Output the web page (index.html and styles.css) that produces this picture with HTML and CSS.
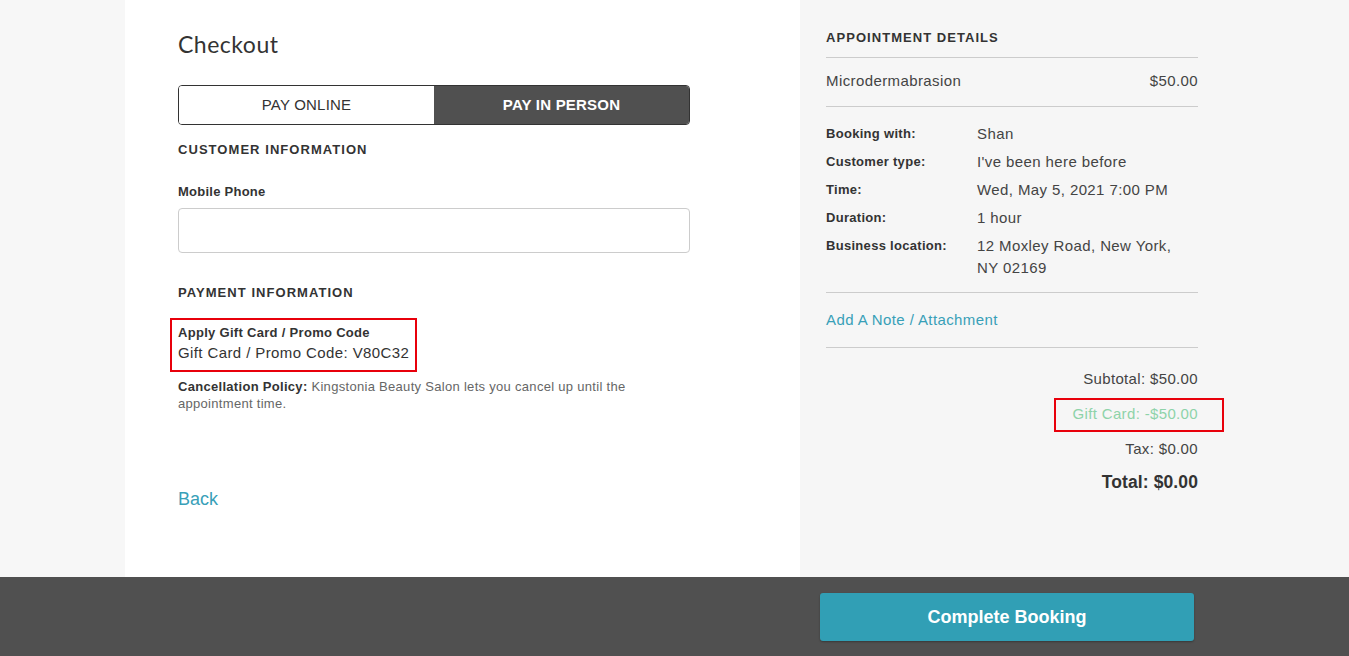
FILE: index.html
```html
<!DOCTYPE html>
<html lang="en">
<head>
    <meta charset="UTF-8">
    <meta name="viewport" content="width=device-width, initial-scale=1.0">
    <title>Checkout</title>
    <link rel="stylesheet" href="styles.css">
</head>
<body>
    <div class="page">
        <div class="content">
            <main class="checkout">
                <h1>Checkout</h1>

                <div class="payToggle">
                    <button type="button" class="payOption">PAY ONLINE</button>
                    <button type="button" class="payOption active">PAY IN PERSON</button>
                </div>

                <h2 class="sectionTitle customerTitle">CUSTOMER INFORMATION</h2>
                <label class="fieldLabel" for="phone">Mobile Phone</label>
                <input id="phone" class="textInput" type="tel">

                <h2 class="sectionTitle paymentTitle">PAYMENT INFORMATION</h2>
                <div class="promo highlight">
                    <div class="promoTitle">Apply Gift Card / Promo Code</div>
                    <div class="promoCode">Gift Card / Promo Code: V80C32</div>
                </div>
                <p class="policy"><b>Cancellation Policy:</b> Kingstonia Beauty Salon lets you cancel up until the appointment time.</p>

                <a class="backLink" href="#">Back</a>
            </main>

            <aside class="summary">
                <h2 class="sectionTitle summaryTitle">APPOINTMENT DETAILS</h2>
                <div class="serviceRow">
                    <span>Microdermabrasion</span>
                    <span>$50.00</span>
                </div>
                <dl class="details">
                    <dt>Booking with:</dt><dd>Shan</dd>
                    <dt>Customer type:</dt><dd>I've been here before</dd>
                    <dt>Time:</dt><dd>Wed, May 5, 2021 7:00 PM</dd>
                    <dt>Duration:</dt><dd>1 hour</dd>
                    <dt>Business location:</dt><dd>12 Moxley Road, New York, NY 02169</dd>
                </dl>
                <div class="noteRow"><a href="#">Add A Note / Attachment</a></div>
                <div class="totals">
                    <div>Subtotal: $50.00</div>
                    <div class="giftLine"><span class="giftMark">Gift Card: -$50.00</span></div>
                    <div>Tax: $0.00</div>
                    <div class="grandTotal">Total: $0.00</div>
                </div>
            </aside>
        </div>

        <footer class="bottomBar">
            <button type="button" class="completeBtn">Complete Booking</button>
        </footer>
    </div>
</body>
</html>
```

FILE: styles.css
```css
* {
    box-sizing: border-box;
}
body {
    margin: 0;
    font-family: 'Liberation Sans', Arial, sans-serif;
    background-color: #f7f7f7;
    color: #444;
}
.page {
    display: flex;
    flex-direction: column;
    height: 100vh;
}
.content {
    flex: 1;
    display: flex;
    min-height: 0;
}
.checkout {
    margin-left: 125px;
    width: 675px;
    background-color: #ffffff;
    padding: 30px 110px 0 53px;
    display: flex;
    flex-direction: column;
    align-items: flex-start;
}
.checkout > * {
    width: 100%;
}
h1 {
    margin: 0 0 27px;
    font-family: 'Lato', 'Liberation Sans', sans-serif;
    font-weight: 400;
    font-size: 23px;
    line-height: 28px;
    letter-spacing: 0.5px;
    color: #333;
}
.payToggle {
    display: flex;
    height: 40px;
    border: 1px solid #333;
    border-radius: 4px;
    overflow: hidden;
}
.payOption {
    flex: 1;
    border: none;
    background: #ffffff;
    font-family: inherit;
    font-size: 15px;
    color: #333;
    letter-spacing: 0.2px;
    padding: 0 0 2px;
}
.payOption.active {
    background: #505050;
    color: #ffffff;
    font-weight: bold;
}
.sectionTitle {
    margin: 0;
    font-size: 13px;
    line-height: 16px;
    font-weight: bold;
    letter-spacing: 1.05px;
    color: #333;
}
.customerTitle {
    margin-top: 17px;
}
.fieldLabel {
    display: block;
    margin-top: 26px;
    font-size: 13px;
    line-height: 16px;
    font-weight: bold;
    letter-spacing: 0.25px;
    color: #333;
}
.textInput {
    display: block;
    margin-top: 8px;
    height: 45px;
    border: 1px solid #ccc;
    border-radius: 4px;
    background: #fff;
}
.paymentTitle {
    margin-top: 32px;
}
.promo {
    width: auto;
    margin: 17px 0 0 -8px;
    padding: 4px 6px 6px 6px;
}
.highlight {
    border: 2px solid #e8000b;
}
.promoTitle {
    font-size: 13px;
    line-height: 18px;
    font-weight: bold;
    letter-spacing: 0.3px;
    color: #333;
}
.promoCode {
    font-size: 15px;
    line-height: 22px;
    letter-spacing: 0.4px;
    color: #333;
}
.policy {
    margin: 6px 0 0;
    font-size: 13px;
    line-height: 17px;
    letter-spacing: 0.3px;
    color: #666;
}
.policy b {
    color: #333;
}
.backLink {
    margin-top: 76px;
    font-size: 18px;
    line-height: 22px;
    color: #38a0b8;
    text-decoration: none;
}
.summary {
    flex: 1;
    background-color: #f6f6f6;
    padding: 30px 151px 0 26px;
}
.summaryTitle {
    padding-bottom: 11px;
    border-bottom: 1px solid #ccc;
}
.serviceRow {
    display: flex;
    justify-content: space-between;
    padding: 12px 0 14px;
    font-size: 15px;
    line-height: 22px;
    letter-spacing: 0.4px;
    border-bottom: 1px solid #ccc;
}
.details {
    margin: 0;
    padding: 16px 0 13px;
    display: grid;
    grid-template-columns: 151px 1fr;
    row-gap: 6px;
    border-bottom: 1px solid #ccc;
}
.details dt {
    font-size: 13px;
    line-height: 22px;
    font-weight: bold;
    letter-spacing: 0.3px;
    color: #333;
}
.details dd {
    margin: 0;
    padding-right: 6px;
    font-size: 15px;
    line-height: 22px;
    letter-spacing: 0.4px;
}
.noteRow {
    padding: 16px 0;
    font-size: 15px;
    line-height: 22px;
    letter-spacing: 0.4px;
    border-bottom: 1px solid #ccc;
}
.noteRow a {
    color: #38a0b8;
    text-decoration: none;
}
.totals {
    margin-top: 20px;
    display: flex;
    flex-direction: column;
    align-items: flex-end;
    gap: 13px;
    font-size: 15px;
    line-height: 22px;
    letter-spacing: 0.35px;
}
.giftLine {
    color: #8ed3a9;
}
.giftMark {
    position: relative;
}
.giftMark::after {
    content: "";
    position: absolute;
    left: -18px;
    right: -26px;
    top: -7px;
    bottom: -10px;
    border: 2px solid #e8000b;
}
.totals .grandTotal {
    margin-top: -2px;
    font-size: 17.5px;
    font-weight: bold;
    letter-spacing: 0.1px;
    color: #333;
}
.bottomBar {
    height: 79px;
    flex-shrink: 0;
    background-color: #505050;
    padding: 16px 0 0 820px;
}
.completeBtn {
    width: 374px;
    height: 48px;
    border: none;
    border-radius: 3px;
    background-color: #319fb5;
    color: #ffffff;
    font-family: inherit;
    font-size: 18px;
    font-weight: bold;
    box-shadow: 0 1px 2px rgba(0, 0, 0, 0.3);
}
```
